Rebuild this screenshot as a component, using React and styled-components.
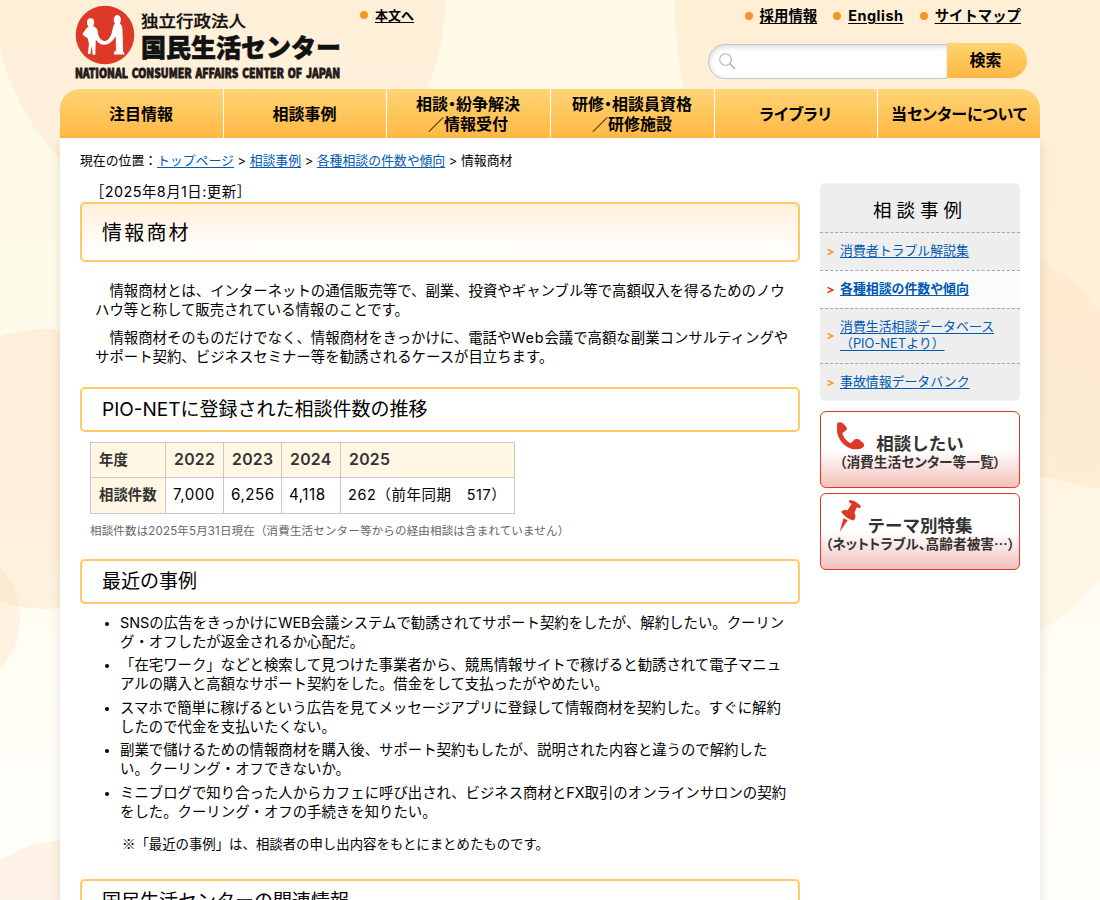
import styled, { createGlobalStyle } from 'styled-components';

const COLORS = {
  orange: '#ff9326',
  yellow: '#ffc966',
  red: '#dc3a26',
  link: '#0059b2',
};

const NAV_ITEMS = [
  ['注目情報'],
  ['相談事例'],
  ['相談・紛争解決', '／情報受付'],
  ['研修・相談員資格', '／研修施設'],
  ['ライブラリ'],
  ['当センターについて'],
];

const CASES = [
  ['SNSの広告をきっかけにWEB会議システムで勧誘されてサポート契約をしたが、解約したい。クーリン', 'グ・オフしたが返金されるか心配だ。'],
  ['「在宅ワーク」などと検索して見つけた事業者から、競馬情報サイトで稼げると勧誘されて電子マニュ', 'アルの購入と高額なサポート契約をした。借金をして支払ったがやめたい。'],
  ['スマホで簡単に稼げるという広告を見てメッセージアプリに登録して情報商材を契約した。すぐに解約', 'したので代金を支払いたくない。'],
  ['副業で儲けるための情報商材を購入後、サポート契約もしたが、説明された内容と違うので解約した', 'い。クーリング・オフできないか。'],
  ['ミニブログで知り合った人からカフェに呼び出され、ビジネス商材とFX取引のオンラインサロンの契約', 'をした。クーリング・オフの手続きを知りたい。'],
];

function App() {
  return (
    <Page>
      <GlobalStyle />
      <Backdrop viewBox="0 0 1100 900" aria-hidden="true">
        <g fill="#fddcbe" fillOpacity="0.32">
          <circle cx="220" cy="0" r="225" />
          <circle cx="1168" cy="0" r="493" fill="#fddab4" />
          <circle cx="926" cy="445" r="219" fill="#fdd5a8" fillOpacity="0.17" />
          <circle cx="45" cy="469" r="140" fillOpacity="0.38" />
          <circle cx="-55" cy="618" r="75" fillOpacity="0.34" />
          <circle cx="70" cy="970" r="130" fillOpacity="0.32" />
        </g>
      </Backdrop>
      <Wrapper>
        <Header>
          <Logo href="#">
            <LogoTop>
              <LogoMark />
              <LogoNames>
                <LogoText $size={16} $width={105} $weight={500} $height={18}>
                  独立行政法人
                </LogoText>
                <LogoText $size={25.5} $width={200} $weight={900} $height={30}>
                  国民生活センター
                </LogoText>
              </LogoNames>
            </LogoTop>
            <LogoEnglish viewBox="0 0 266 12">
              <text x="0" y="11" textLength="265" lengthAdjust="spacingAndGlyphs">
                NATIONAL CONSUMER AFFAIRS CENTER OF JAPAN
              </text>
            </LogoEnglish>
          </Logo>
          <SkipLink>
            <UtilLink $size={13} href="#main">本文へ</UtilLink>
          </SkipLink>
          <HeaderRight>
            <UtilList>
              <UtilLink $size={14.4} href="#">採用情報</UtilLink>
              <UtilLink $size={14.4} $spacing={0.55} href="#">English</UtilLink>
              <UtilLink $size={14.4} href="#">サイトマップ</UtilLink>
            </UtilList>
            <SearchForm>
              <SearchBox>
                <svg width="17" height="17" viewBox="0 0 17 17" fill="none" stroke="#b1b4a4" strokeWidth="1.1">
                  <circle cx="6.5" cy="6.5" r="5.8" />
                  <path d="M10.8 10.8L16 16" strokeWidth="1.6" />
                </svg>
              </SearchBox>
              <SearchButton type="button">検索</SearchButton>
            </SearchForm>
          </HeaderRight>
        </Header>

        <GlobalNav>
          {NAV_ITEMS.map((lines) => (
            <NavItem key={lines[0]} href="#">
              {lines.map((line) => (
                <Line key={line}>{line}</Line>
              ))}
            </NavItem>
          ))}
        </GlobalNav>

        <Body>
          <Breadcrumb>
            現在の位置：<a href="#">トップページ</a> &gt; <a href="#">相談事例</a> &gt;{' '}
            <a href="#">各種相談の件数や傾向</a> &gt; 情報商材
          </Breadcrumb>
          <Columns>
            <Main id="main">
              <Updated>［2025年8月1日:更新］</Updated>
              <Heading1>情報商材</Heading1>
              <Lead>
                <p>
                  <Line>　情報商材とは、インターネットの通信販売等で、副業、投資やギャンブル等で高額収入を得るためのノウ</Line>
                  <Line>ハウ等と称して販売されている情報のことです。</Line>
                </p>
                <p>
                  <Line>　情報商材そのものだけでなく、情報商材をきっかけに、電話や<Latin>Web</Latin>会議で高額な副業コンサルティングや</Line>
                  <Line>サポート契約、ビジネスセミナー等を勧誘されるケースが目立ちます。</Line>
                </p>
              </Lead>

              <Heading2>PIO-NETに登録された相談件数の推移</Heading2>
              <Table>
                <tbody>
                  <tr>
                    <Th $width={75}>年度</Th>
                    <Th $width={58} $number>2022</Th>
                    <Th $width={58} $number>2023</Th>
                    <Th $width={59} $number>2024</Th>
                    <Th $width={174} $number>2025</Th>
                  </tr>
                  <tr>
                    <Th>相談件数</Th>
                    <Td $number>7,000</Td>
                    <Td $number>6,256</Td>
                    <Td $number>4,118</Td>
                    <Td>262（前年同期　517）</Td>
                  </tr>
                </tbody>
              </Table>
              <TableNote>
                相談件数は2025年5月31日現在（消費生活センター等からの経由相談は含まれていません）
              </TableNote>

              <Heading2>最近の事例</Heading2>
              <CaseList>
                {CASES.map((lines) => (
                  <li key={lines[0]}>
                    {lines.map((line) => (
                      <Line key={line}>{line}</Line>
                    ))}
                  </li>
                ))}
              </CaseList>
              <CaseNote>※「最近の事例」は、相談者の申し出内容をもとにまとめたものです。</CaseNote>

              <Heading2>国民生活センターの関連情報</Heading2>
            </Main>

            <Sidebar>
              <SideNav>
                <SideTitle>相談事例</SideTitle>
                <SideItem>
                  <Chevron />
                  <a href="#">消費者トラブル解説集</a>
                </SideItem>
                <SideItem $current>
                  <Chevron $current />
                  <a href="#">各種相談の件数や傾向</a>
                </SideItem>
                <SideItem $tall>
                  <Chevron />
                  <a href="#">
                    消費生活相談データベース
                    <br />
                    （PIO-NETより）
                  </a>
                </SideItem>
                <SideItem>
                  <Chevron />
                  <a href="#">事故情報データバンク</a>
                </SideItem>
              </SideNav>
              <Banner href="#">
                <BannerIcon $left={16} $top={10} width="28" height="28" viewBox="0 0 28 28">
                  <path d="M.3 1C1.500-.2 4.300-.1 5.600 1L9.300 5C10.300 6.300 10.200 7.300 9.200 8.300L6.100 10.600C5.500 11.300 5.500 12 5.800 12.700 7.300 16.500 10 19.500 13.600 21.200L16.500 18.400C18 17 20.500 16.600 22 17.500L26 20.700C27.500 22 27.500 23.500 26.600 24.800 24.700 27.300 18.500 28.200 13.500 26.500 6.500 24 .3 16.500 0 8 0 5.500 0 2.500.3 1z" />
                </BannerIcon>
                <BannerTitle>相談したい</BannerTitle>
                <BannerSub>（消費生活センター等一覧）</BannerSub>
              </Banner>
              <Banner href="#">
                <BannerIcon $left={18} $top={6} width="24" height="33" viewBox="0 0 24 33">
                  <path d="M10.300 0C14.500.2 19 2.600 21.900 6L21 8.200 17.700 7.300 15.500 13C17 15.600 16.700 18 14.500 20.500 9.800 19.500 5 16.300 2.200 11.800 4 9.800 6 9.600 8.600 10.200L12.600 4 10 2.200zM4.400 18.200L8.800 20.300.8 31.700z" />
                </BannerIcon>
                <BannerTitle>テーマ別特集</BannerTitle>
                <BannerSub>（ネットトラブル、高齢者被害…）</BannerSub>
              </Banner>
            </Sidebar>
          </Columns>
        </Body>
      </Wrapper>
    </Page>
  );
}

function LogoText({ children, $size, $width, $weight, $height }) {
  return (
    <LogoTextSvg width="200" height={$height} $bold={$weight > 500}>
      <text
        x="0"
        y={$height - 4}
        fontSize={$size}
        fontWeight={$weight}
        textLength={$width}
        lengthAdjust="spacingAndGlyphs"
      >
        {children}
      </text>
    </LogoTextSvg>
  );
}

function LogoMark() {
  return (
    <svg width="60" height="60" viewBox="0 0 60 60">
      <circle cx="30" cy="30" r="29.300" fill={COLORS.red} />
      <g fill="#fff">
        <ellipse cx="15.600" cy="17.600" rx="3.600" ry="4.400" />
        <ellipse cx="42.300" cy="14.800" rx="3.600" ry="4.800" />
        <path d="M7.500 29C9.500 25.500 12 22.500 14 21H18C21 22 22.500 24 22.800 27 23.200 31 25 35 29.300 36.200 33 36 36 31.500 37 27L38.200 21.500C39 19.500 40 18.500 41 18H44C46 19 47 20.500 47.300 22.500L47.800 34 48 46 49.800 49.500H38.800L39 47 41 45.500 40.700 31C38.500 35.500 34 39.800 29.300 39.800 25.500 39.800 22.500 37.500 20.800 34.500L20.300 49.800H17.500L17 40.500 15.300 49H12.800L14 39 12.600 33C10.500 32 8.500 30.800 7.500 29z" />
      </g>
    </svg>
  );
}

function Chevron({ $current }) {
  return (
    <ChevronSvg width="7" height="8" viewBox="0 0 7 8" $current={$current}>
      <path d="M.5 1.300L5.800 4 .5 6.700" />
    </ChevronSvg>
  );
}

const GlobalStyle = createGlobalStyle`
  * {
    box-sizing: border-box;
  }

  body {
    margin: 0;
    color: #000;
    font-family: Inter, 'Noto Sans CJK JP', sans-serif;
  }

  a {
    color: ${COLORS.link};
    text-underline-offset: 2px;
  }

  p {
    margin: 0;
  }
`;

const Line = styled.span`
  display: block;
  white-space: nowrap;
`;

const Latin = styled.span`
  letter-spacing: 0.8px;
`;

const Page = styled.div`
  position: relative;
  height: 900px;
  overflow: hidden;
  background: linear-gradient(#fff9e5, #fffcee 50%, #fffefb);
`;

const Backdrop = styled.svg`
  position: absolute;
  inset: 0;
  width: 1100px;
  height: 900px;
`;

const Wrapper = styled.div`
  position: relative;
  width: 980px;
  margin: 0 auto;
`;

const Header = styled.header`
  display: flex;
  height: 89px;
`;

const Logo = styled.a`
  width: 266px;
  margin: 5px 0 0 15px;
`;

const LogoTop = styled.div`
  display: flex;
  gap: 6px;
  height: 62px;
`;

const LogoNames = styled.div`
  display: flex;
  flex-direction: column;
  padding-top: 8px;
`;

const LogoTextSvg = styled.svg`
  display: block;
  fill: #111;
  stroke: #111;
  stroke-width: ${(p) => (p.$bold ? 0.6 : 0.3)}px;
  overflow: visible;
  font-family: 'Noto Sans CJK JP', sans-serif;
`;

const LogoEnglish = styled.svg`
  display: block;
  width: 266px;
  height: 12px;
  overflow: visible;
  fill: #231815;
  stroke: #231815;
  stroke-width: 0.8px;
  font: 900 12.8px 'Noto Sans CJK JP', sans-serif;
  word-spacing: 2px;
`;

const SkipLink = styled.div`
  display: flex;
  flex: 1;
  padding: 5px 0 0 19px;
`;

const UtilLink = styled.a`
  display: inline-flex;
  align-items: center;
  gap: 7px;
  color: #000;
  font-size: ${(p) => p.$size}px;
  font-weight: 700;
  letter-spacing: ${(p) => p.$spacing || 0}px;
  line-height: 20px;
  height: 20px;

  &::before {
    content: '';
    width: 8px;
    height: 8px;
    border-radius: 50%;
    background: ${COLORS.orange};
  }
`;

const HeaderRight = styled.div`
  width: 332px;
  padding-right: 13px;
`;

const UtilList = styled.nav`
  display: flex;
  justify-content: flex-end;
  gap: 16px;
  padding: 6px 6px 0 0;
`;

const SearchForm = styled.form`
  display: flex;
  margin-top: 17px;
`;

const SearchBox = styled.label`
  display: flex;
  align-items: flex-start;
  width: 239px;
  height: 35px;
  margin-top: 1px;
  padding: 8px 0 0 10px;
  border: 1px solid #c4c4ca;
  border-width: 1px 0 1px 1px;
  border-radius: 18px 0 0 18px;
  background: #fff;
  box-shadow: inset 1px 2px 5px rgba(0, 0, 0, 0.14);
`;

const SearchButton = styled.button`
  width: 80px;
  height: 35px;
  padding: 0 3px 3px 0;
  border: 0;
  border-radius: 0 18px 18px 0;
  background: linear-gradient(#ffd470, #ffb742);
  font: 700 16px 'Noto Sans CJK JP', sans-serif;
  color: #000;
`;

const GlobalNav = styled.nav`
  display: grid;
  grid-template-columns: 164px 163px 164px 164px 163px 162px;
  height: 49px;
  border-radius: 20px 20px 0 0;
  overflow: hidden;
  background: linear-gradient(#ffd475, #ffb844);
`;

const NavItem = styled.a`
  display: flex;
  flex-direction: column;
  align-items: center;
  justify-content: center;
  padding-right: 1px;
  border-right: 1px solid #fff;
  color: #000;
  font-family: 'Noto Sans CJK JP', sans-serif;
  font-feature-settings: 'palt';
  font-size: 16px;
  font-weight: 700;
  line-height: 19.5px;
  text-decoration: none;

  &:last-child {
    padding-right: 0;
    border-right: 0;
  }
`;

const Body = styled.div`
  height: 762px;
  padding: 14px 20px 0;
  background: #fff;
  box-shadow: 0 6px 10px rgba(100, 90, 60, 0.18);
`;

const Breadcrumb = styled.div`
  height: 31px;
  font-size: 12.85px;
  line-height: 18px;
`;

const Columns = styled.div`
  display: flex;
  justify-content: space-between;
`;

const Main = styled.main`
  width: 720px;
`;

const Updated = styled.p`
  height: 19px;
  padding-left: 10px;
  font-size: 14.4px;
  letter-spacing: 0.45px;
  line-height: 18px;
`;

const Heading1 = styled.h1`
  height: 60px;
  margin: 0;
  padding-left: 20px;
  border: 2px solid ${COLORS.yellow};
  border-radius: 5px;
  background: linear-gradient(#fff0db, #fff 90%);
  font-size: 20px;
  font-weight: 400;
  letter-spacing: 2.2px;
  line-height: 58px;
`;

const Heading2 = styled.h2`
  height: 45px;
  margin: 0;
  padding-left: 20px;
  border: 2px solid ${COLORS.yellow};
  border-radius: 5px;
  font-size: 19px;
  font-weight: 400;
  line-height: 42px;
`;

const Lead = styled.div`
  display: grid;
  gap: 9px;
  padding: 19px 0 21px 15px;
  font-size: 14.4px;
  line-height: 19px;
`;

const Table = styled.table`
  width: 425px;
  margin: 10px 0 0 10px;
  border-collapse: collapse;
  table-layout: fixed;
  color: #000;
`;

const Td = styled.td`
  height: 36px;
  padding: 0 0 2px 7px;
  border: 1px solid #c8c8c8;
  font-size: ${(p) => (p.$number ? 15.2 : 14.4)}px;
  letter-spacing: ${(p) => (p.$number ? 0.5 : 0.65)}px;
  line-height: 18px;
  text-align: left;
  white-space: nowrap;
`;

const Th = styled(Td).attrs({ as: 'th' })`
  width: ${(p) => p.$width}px;
  height: 35px;
  padding-left: 8px;
  padding-bottom: ${(p) => (p.$width ? 0 : 2)}px;
  background: #fff7e3;
  color: #333;
  font-size: ${(p) => (p.$number ? 15.8 : 14.4)}px;
  font-weight: ${(p) => (p.$number ? 600 : 700)};
  letter-spacing: ${(p) => (p.$number ? 0.3 : 0)}px;
`;

const TableNote = styled.p`
  padding: 9px 0 19px 10px;
  color: #666;
  font-size: 11.5px;
  letter-spacing: 0.17px;
  line-height: 17px;
`;

const CaseList = styled.ul`
  display: grid;
  gap: 4.700px;
  margin: 0;
  padding: 9.600px 0 0 40px;
  font-size: 14.4px;
  line-height: 18.900px;

  li::marker {
    font-size: 12px;
  }
`;

const CaseNote = styled.p`
  padding: 13px 0 26.400px 42px;
  font-family: 'Noto Sans CJK JP', sans-serif;
  font-size: 13.4px;
  line-height: 18px;
`;

const Sidebar = styled.aside`
  width: 200px;
`;

const SideNav = styled.nav`
  border-radius: 5px;
  overflow: hidden;
  background: #eee;
`;

const SideTitle = styled.h2`
  height: 49px;
  margin: 0;
  padding-top: 4px;
  font-size: 18.5px;
  font-weight: 400;
  letter-spacing: 5px;
  line-height: 46px;
  text-align: center;
`;

const SideItem = styled.div`
  display: flex;
  align-items: center;
  height: ${(p) => (p.$tall ? 55 : 38)}px;
  padding: 0 0 3px 7px;
  border-top: 1px dashed #a6a6a6;
  background: ${(p) => (p.$current ? '#fcfcfc' : 'transparent')};
  font-size: 12.9px;
  font-weight: ${(p) => (p.$current ? 700 : 400)};
  line-height: 17px;
  white-space: nowrap;
`;

const ChevronSvg = styled.svg`
  margin: 3px 6px 0 0;
  fill: none;
  stroke: ${(p) => (p.$current ? COLORS.red : COLORS.orange)};
  stroke-width: 1.5px;
`;

const Banner = styled.a`
  position: relative;
  display: flex;
  flex-direction: column;
  align-items: center;
  height: 77px;
  margin-top: 10px;
  padding-top: 20px;
  border: 1px solid ${COLORS.red};
  border-radius: 6px;
  background: linear-gradient(#fff 50%, #f4c0bb);
  color: #333;
  font-family: 'Noto Sans CJK JP', sans-serif;
  text-decoration: none;

  & + & {
    margin-top: 5px;
  }
`;

const BannerIcon = styled.svg`
  position: absolute;
  left: ${(p) => p.$left}px;
  top: ${(p) => p.$top}px;
  fill: ${COLORS.red};
`;

const BannerTitle = styled.strong`
  font-size: 17.5px;
  font-weight: 700;
  line-height: 21px;
  white-space: nowrap;
`;

const BannerSub = styled.span`
  font-size: 13.7px;
  font-weight: 700;
  line-height: 16px;
  white-space: nowrap;
  font-feature-settings: 'palt';
`;

export default App;
